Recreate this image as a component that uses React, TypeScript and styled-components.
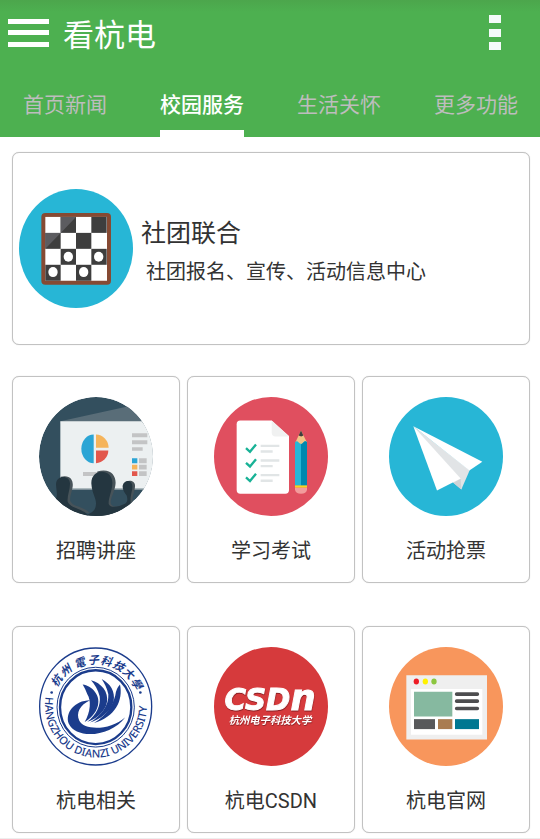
import React, { useState } from 'react';
import styled, { createGlobalStyle } from 'styled-components';

const GlobalStyle = createGlobalStyle`
  * { box-sizing: border-box; }
  body {
    margin: 0;
    background: #fff;
    color: #333;
    font-family: Roboto, "Noto Sans CJK SC", sans-serif;
  }
  button {
    font: inherit;
    color: inherit;
    margin: 0;
    padding: 0;
    border: 0;
    background: none;
    cursor: pointer;
  }
`;

const Page = styled.div`
  display: flex;
  flex-direction: column;
  min-height: 100vh;
  border-bottom: 1px solid #eee;
`;

const Header = styled.header`
  background: linear-gradient(#4ca64c, #4db050 12px);
`;

const Toolbar = styled.div`
  display: flex;
  align-items: center;
  height: 66px;
  padding: 0 36px 0 8px;
`;

const IconButton = styled.button`
  display: flex;
`;

const PageTitle = styled.h1`
  flex: 1;
  margin: 0 0 0 14px;
  padding-top: 6px;
  color: #fff;
  font-size: 31px;
  font-weight: 400;
  line-height: 40px;
`;

const TabBar = styled.div`
  display: flex;
  justify-content: space-between;
  padding: 0 22px 0 23px;
`;

const Tab = styled.button<{ $active: boolean }>`
  height: 71px;
  padding-top: 14px;
  border-bottom: 7px solid ${(p) => (p.$active ? '#fff' : 'transparent')};
  color: ${(p) => (p.$active ? '#fff' : '#bdbdbd')};
  font-size: 21px;
  font-weight: ${(p) => (p.$active ? 500 : 400)};
  line-height: 50px;
`;

const Content = styled.main`
  display: flex;
  flex-direction: column;
  gap: 31px;
  padding: 15px 10px 5px 12px;
`;

const Card = styled.button`
  border: 1px solid #c2c2c2;
  border-radius: 7px;
  background: #fff;
  box-shadow: 0 0 1px #ccc;
`;

const FeatureCard = styled(Card)`
  display: flex;
  align-items: center;
  gap: 8px;
  height: 193px;
  padding-left: 6px;
  text-align: left;
`;

const FeatureText = styled.span`
  display: flex;
  flex-direction: column;
  gap: 6px;
  padding-top: 4px;
`;

const FeatureTitle = styled.span`
  font-size: 25px;
  line-height: 36px;
`;

const FeatureNote = styled.span`
  padding-left: 5px;
  font-size: 20px;
  line-height: 28px;
`;

const TileGrid = styled.div`
  display: grid;
  grid-template-columns: repeat(3, 1fr);
  gap: 43px 7px;
`;

const Tile = styled(Card)`
  display: flex;
  flex-direction: column;
  align-items: center;
  gap: 21px;
  height: 207px;
  padding-top: 20px;
`;

const TileLabel = styled.span`
  font-size: 20px;
  line-height: 28px;
`;

const Badge = styled.svg`
  display: block;
  width: 114px;
  height: 119px;
  flex: none;
`;

const Engraved = styled.g`
  fill: #fff;
  font-style: italic;
  font-weight: 700;
  text-anchor: middle;
  filter: drop-shadow(1px 3px 2px #8c2024);
`;

const BOX = '87 80 342 358';

const Disc = ({ fill }: { fill: string }) => (
  <ellipse cx="258" cy="259" rx="171" ry="179" fill={fill} />
);

const ChessIcon = () => (
  <Badge viewBox="57 131 342 358" preserveAspectRatio="none" aria-hidden="true">
    <ellipse cx="228" cy="310" rx="171" ry="179" fill="#27b6d6" />
    <rect x="124" y="203" width="209" height="216" rx="12" fill="#864a33" />
    <rect x="136" y="215" width="185" height="192" fill="#fff" />
    {[0, 1, 2, 3].map((row) =>
      [0, 1, 2, 3]
        .filter((col) => (row + col) % 2 === 1)
        .map((col) => (
          <rect key={`${row}${col}`} x={136 + col * 46} y={215 + row * 48} width="46" height="48" fill="#3e3e3e" />
        )),
    )}
    <path d="M182 215H228L182 263ZM136 263H182L136 311Z" fill="#5c5c60" />
    <g fill="#fff">
      <ellipse cx="205" cy="335" rx="14" ry="15" />
      <ellipse cx="296" cy="335" rx="14" ry="15" />
      <ellipse cx="159" cy="381" rx="14" ry="15" />
      <ellipse cx="251" cy="381" rx="14" ry="15" />
    </g>
  </Badge>
);

const LectureIcon = () => (
  <Badge viewBox={BOX} preserveAspectRatio="none" aria-hidden="true">
    <clipPath id="lecture-disc">
      <ellipse cx="258" cy="259" rx="171" ry="179" />
    </clipPath>
    <g clipPath="url(#lecture-disc)">
      <Disc fill="#334f5e" />
      <path d="M151 153L346 110L429 90V160H151Z" fill="#596d78" />
      <path d="M151 153H429V356H151Z" fill="#ecf0f1" />
      <path d="M151 356H429V360H151Z" fill="#7f9099" />
      <path d="M251 193A37 43 0 0 0 251 279Z" fill="#2ba5d5" />
      <path d="M258 193A38 41 0 0 1 296 233H258Z" fill="#f5b45b" />
      <path d="M258 241H295A38 39 0 0 1 258 279Z" fill="#e2574c" />
      <path d="M366 189H412V201H366ZM366 210H412V222H366ZM366 231H398V242H366ZM387 264H410V279H387ZM387 284H410V298H387ZM387 303H410V318H387ZM219 306H296V318H219Z" fill="#c3c4c5" />
      <path d="M366 264H382V279H366Z" fill="#2ba5d5" />
      <path d="M366 284H382V298H366Z" fill="#f5b45b" />
      <path d="M366 303H382V318H366Z" fill="#e2574c" />
      <path d="M152 320C185 312 192 336 187 355C184 371 178 383 181 394C190 412 222 409 240 430L150 420Z" fill="#475359" />
      <path d="M262 304C303 292 321 319 316 346C313 366 302 382 302 398C304 410 315 411 330 407C350 401 358 398 360 382C357 370 340 361 342 346C346 326 378 328 375 350C374 368 366 375 368 398L320 438H262Z" fill="#475359" />
      <path d="M138 343C139 314 179 314 180 340C180 361 171 376 173 395C182 416 220 415 236 438H100L132 390C146 385 139 362 138 343Z" fill="#243640" />
      <path d="M244 340C243 292 309 294 307 340C306 365 295 383 296 402C302 417 328 409 343 402C354 397 353 386 350 376C342 367 337 357 338 347C343 326 368 330 367 350C367 365 360 374 362 400L310 438H225C249 425 257 423 258 400C258 382 246 371 244 340Z" fill="#243640" />
    </g>
  </Badge>
);

const ExamIcon = () => (
  <Badge viewBox={BOX} preserveAspectRatio="none" aria-hidden="true">
    <Disc fill="#e04f5f" />
    <path d="M166 151H260L312 197V360Q312 371 301 371H166Q155 371 155 360V162Q155 151 166 151Z" fill="#fff" />
    <path d="M260 151L312 199H272Q260 199 260 187Z" fill="#f0f1f1" />
    {[0, 44, 88].map((dy) => (
      <g key={dy}>
        <path d={`M183 ${234 + dy}L195 ${245 + dy}L213 ${223 + dy}`} fill="none" stroke="#18b296" strokeWidth="7" />
        <path d={`M227 ${227 + dy}H283M227 ${244 + dy}H263`} stroke="#e1e5e6" strokeWidth="7" />
      </g>
    ))}
    <path d="M331 217L348 181L366 217V230H331Z" fill="#f2c386" />
    <path d="M348 181L341 196Q349 201 355 196Z" fill="#3e3e3f" />
    <path d="M330 216Q336 210 341 217Q349 226 355 217Q361 210 366 216V347H330Z" fill="#27b6d6" />
    <path d="M348 222Q353 221 355 217Q361 210 366 216V347H348Z" fill="#0088af" />
    <path d="M330 346H366V353H330Z" fill="#f6d51f" />
    <path d="M330 353H366V359Q364 371 348 371Q332 371 330 359Z" fill="#f29c9c" />
  </Badge>
);

const PlaneIcon = () => (
  <Badge viewBox={BOX} preserveAspectRatio="none" aria-hidden="true">
    <Disc fill="#27b6d6" />
    <path d="M160 168L329 300L304 358L280 338Z" fill="#e1e4e6" />
    <path d="M280 338L302 326L304 358Z" fill="#cfd3d6" />
    <path d="M160 168L367 275L328 301Z" fill="#fff" />
    <path d="M160 168L302 325L231 361Z" fill="#fff" />
  </Badge>
);

const SEAL_TOP: [string, number][] = [
  ['杭', -56],
  ['州', -39],
  ['電', -20],
  ['子', -3],
  ['科', 13],
  ['技', 29],
  ['大', 44],
  ['學', 60],
];

const SealIcon = () => (
  <Badge viewBox={BOX} preserveAspectRatio="none" aria-hidden="true">
    <g fill="none" stroke="#1b3c8c">
      <ellipse cx="257" cy="259" rx="168" ry="176" strokeWidth="4" />
      <ellipse cx="257" cy="261" rx="116" ry="120" strokeWidth="3" />
      <ellipse cx="257" cy="261" rx="107" ry="111" strokeWidth="7" />
    </g>
    <g fill="#1b3c8c">
      <path d="M218 193C245 196 272 225 264 255C258 280 240 295 224 306C242 275 244 240 232 222Q226 206 218 193Z" />
      <path d="M243 180C274 188 296 215 291 245C287 275 255 300 232 305C259 285 273 255 269 228C264 208 254 192 243 180Z" />
      <path d="M275 176C302 190 316 215 311 242C303 275 268 300 240 307C275 285 297 255 295 222C291 203 283 188 275 176Z" />
      <path d="M330 193C340 240 317 290 252 309C290 285 308 255 316 225Q318 206 330 193Z" />
      <path d="M240 240C193 241 165 278 176 310C198 358 300 352 346 291C300 332 222 331 208 302C197 278 210 254 240 240Z" />
      <circle cx="125" cy="217" r="4" />
      <circle cx="391" cy="217" r="4" />
    </g>
    <path id="seal-arc" d="M107 230A153 157 0 1 0 409 230" fill="none" />
    <text fill="#1b3c8c" fontFamily="'Noto Sans', sans-serif" fontSize="33" fontWeight="500">
      <textPath href="#seal-arc">HANGZHOU DIANZI UNIVERSITY</textPath>
    </text>
    <g fill="#1b3c8c" fontFamily="'Noto Sans CJK SC', sans-serif" fontSize="33" fontWeight="700" fontStyle="italic" textAnchor="middle">
      {SEAL_TOP.map(([char, angle]) => (
        <text key={char} x="257" y="131" transform={`rotate(${angle} 257 261)`}>
          {char}
        </text>
      ))}
    </g>
  </Badge>
);

const CsdnIcon = () => (
  <Badge viewBox={BOX} preserveAspectRatio="none" aria-hidden="true">
    <Disc fill="#d63a3c" />
    <Engraved>
      <text x="255" y="271" fontFamily="'DejaVu Sans', sans-serif" fontSize="88" stroke="#fff" strokeWidth="3">
        CSD<tspan fontSize="106">n</tspan>
      </text>
      <text x="255" y="311" fontFamily="'Noto Sans CJK SC', sans-serif" fontSize="31">
        杭州电子科技大学
      </text>
    </Engraved>
  </Badge>
);

const WebsiteIcon = () => (
  <Badge viewBox={BOX} preserveAspectRatio="none" aria-hidden="true">
    <Disc fill="#f8965c" />
    <path d="M139 165H381V358H139Z" fill="#efefef" />
    <path d="M153 206H367V344H153Z" fill="#fff" />
    <ellipse cx="169" cy="184" rx="8" ry="9" fill="#ee1c25" />
    <ellipse cx="196" cy="184" rx="8" ry="9" fill="#fff200" />
    <ellipse cx="222" cy="184" rx="8" ry="9" fill="#8cc63f" />
    <path d="M162 215H277V289H162Z" fill="#86b9a0" />
    <path d="M290 222H352M290 243H352M290 265H352" stroke="#4d4d4f" strokeWidth="11" strokeLinecap="round" />
    <path d="M162 297H225V327H162Z" fill="#58595b" />
    <path d="M234 297H277V327H234Z" fill="#a97c50" />
    <path d="M285 297H357V327H285Z" fill="#007791" />
  </Badge>
);

const TABS = ['首页新闻', '校园服务', '生活关怀', '更多功能'];

const TILES = [
  { label: '招聘讲座', Icon: LectureIcon },
  { label: '学习考试', Icon: ExamIcon },
  { label: '活动抢票', Icon: PlaneIcon },
  { label: '杭电相关', Icon: SealIcon },
  { label: '杭电CSDN', Icon: CsdnIcon },
  { label: '杭电官网', Icon: WebsiteIcon },
];

export default function App() {
  const [active, setActive] = useState(1);

  return (
    <Page>
      <GlobalStyle />
      <Header>
        <Toolbar>
          <IconButton type="button" aria-label="菜单">
            <svg width="41" height="30" viewBox="0 0 41 30" fill="#fff" aria-hidden="true">
              <path d="M0 1H41V6H0ZM0 12H41V17H0ZM0 24H41V29H0Z" />
            </svg>
          </IconButton>
          <PageTitle>看杭电</PageTitle>
          <IconButton type="button" aria-label="更多选项">
            <svg width="16" height="38" viewBox="0 0 16 38" fill="#f4fafa" aria-hidden="true">
              <path d="M1 1H13V9H1ZM1 15H13V23H1ZM1 28H13V36H1Z" />
            </svg>
          </IconButton>
        </Toolbar>
        <TabBar role="tablist">
          {TABS.map((name, i) => (
            <Tab
              key={name}
              type="button"
              role="tab"
              aria-selected={i === active}
              $active={i === active}
              onClick={() => setActive(i)}
            >
              {name}
            </Tab>
          ))}
        </TabBar>
      </Header>
      <Content>
        <FeatureCard type="button">
          <ChessIcon />
          <FeatureText>
            <FeatureTitle>社团联合</FeatureTitle>
            <FeatureNote>社团报名、宣传、活动信息中心</FeatureNote>
          </FeatureText>
        </FeatureCard>
        <TileGrid>
          {TILES.map(({ label, Icon }) => (
            <Tile key={label} type="button">
              <Icon />
              <TileLabel>{label}</TileLabel>
            </Tile>
          ))}
        </TileGrid>
      </Content>
    </Page>
  );
}
